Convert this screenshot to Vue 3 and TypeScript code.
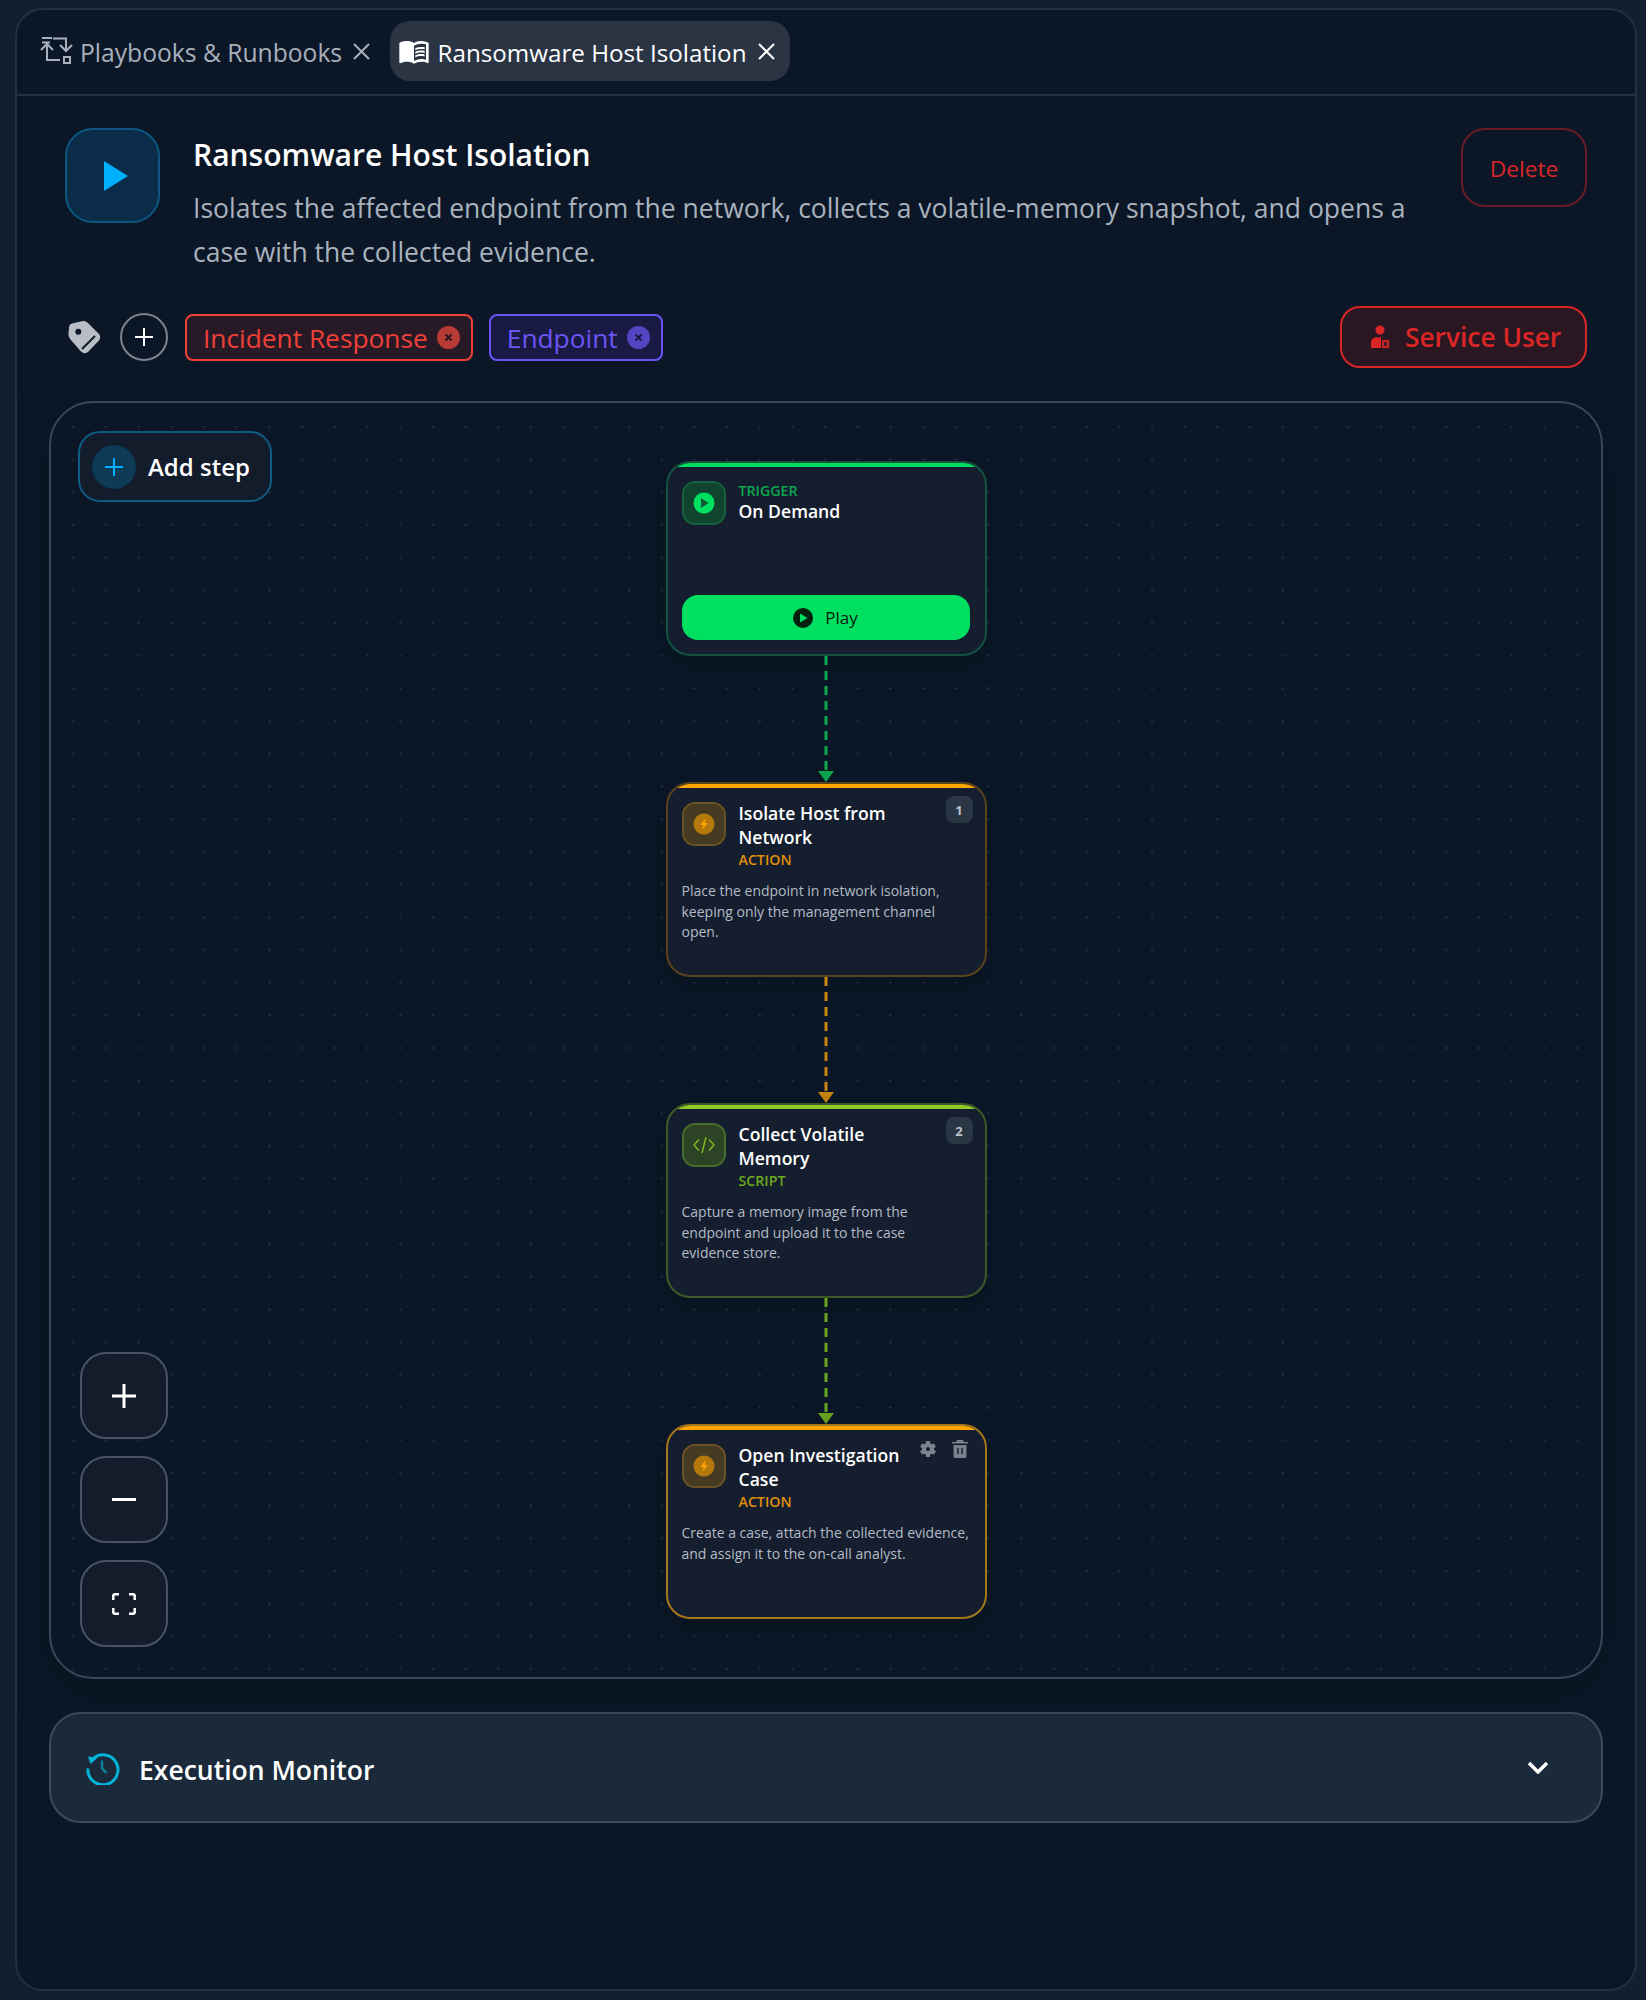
<script setup lang="ts">
type Kind = 'action' | 'script'
interface Step {
  id: number
  kind: Kind
  label: string
  title: string
  desc: string
  active?: boolean
}
const steps: Step[] = [
  { id: 1, kind: 'action', label: 'ACTION', title: 'Isolate Host from Network', desc: 'Place the endpoint in network isolation,\nkeeping only the management channel\nopen.' },
  { id: 2, kind: 'script', label: 'SCRIPT', title: 'Collect Volatile Memory', desc: 'Capture a memory image from the\nendpoint and upload it to the case\nevidence store.' },
  { id: 3, kind: 'action', label: 'ACTION', title: 'Open Investigation Case', desc: 'Create a case, attach the collected evidence,\nand assign it to the on-call analyst.', active: true },
]
</script>

<template>
  <div class="panel">
    <nav class="tabs">
      <div class="tab">
        <svg class="tab-flow" viewBox="0 0 28 28" fill="none" stroke="currentColor" stroke-width="2">
          <path d="M-1 1h10M-1 5.500h8M10 1.500h13V14M17 8l6 6 6-6M4 23V7.500M-2 13l6-6 6 6M3 23h14" />
          <rect x="21" y="20" width="6" height="6" />
        </svg>
        <span class="tab-label-a">Playbooks &amp; Runbooks</span>
        <svg class="tab-x" viewBox="0 0 17 17" fill="none" stroke="currentColor" stroke-width="2"><path d="M1 1l15 15M16 1L1 16" /></svg>
      </div>
      <div class="tab tab-on">
        <svg class="tab-book" viewBox="0 0 24 24" fill="currentColor">
          <path d="M21 5c-1.11-.35-2.33-.5-3.5-.5-1.95 0-4.05.4-5.5 1.5-1.45-1.1-3.55-1.5-5.5-1.5S2.45 4.9 1 6v14.65c0 .25.25.5.5.5.1 0 .15-.05.25-.05C3.1 20.45 5.05 20 6.5 20c1.95 0 4.05.4 5.5 1.5 1.35-.85 3.8-1.5 5.5-1.5 1.65 0 3.35.3 4.75 1.05.1.05.15.05.25.05.25 0 .5-.25.5-.5V6c-.6-.45-1.25-.75-2-1zm0 13.5c-1.1-.35-2.3-.5-3.5-.5-1.7 0-4.15.65-5.5 1.5V8c1.35-.85 3.8-1.5 5.5-1.5 1.2 0 2.4.15 3.5.5v11.5z" />
          <path d="M17.5 10.5c.88 0 1.73.09 2.5.26V9.24c-.79-.15-1.64-.24-2.5-.24-1.7 0-3.24.29-4.5.83v1.66c1.13-.64 2.7-.99 4.5-.99zM13 12.49v1.66c1.13-.64 2.7-.99 4.5-.99.88 0 1.73.09 2.5.26V11.9c-.79-.15-1.64-.24-2.5-.24-1.7 0-3.24.3-4.5.83zM17.5 14.33c-1.7 0-3.24.29-4.5.83v1.66c1.13-.64 2.7-.99 4.5-.99.88 0 1.73.09 2.5.26v-1.52c-.79-.16-1.64-.24-2.5-.24z" />
        </svg>
        <span class="tab-label-b">Ransomware Host Isolation</span>
        <svg class="tab-x" viewBox="0 0 17 17" fill="none" stroke="currentColor" stroke-width="2"><path d="M1 1l15 15M16 1L1 16" /></svg>
      </div>
    </nav>

    <header class="head">
      <div class="head-icon">
        <svg width="24" height="30" viewBox="0 0 24 30"><path d="M0 0l24 15L0 30z" fill="#00b0ff" /></svg>
      </div>
      <div class="head-text">
        <h1>Ransomware Host Isolation</h1>
        <p>Isolates the affected endpoint from the network, collects a volatile-memory snapshot, and opens a case with the collected evidence.</p>
      </div>
      <button class="delete">Delete</button>
    </header>

    <div class="meta">
      <svg class="tag-ico" viewBox="0 0 34 34">
        <path d="M16 1 5 3.500Q2 4 2 8l-.5 5Q1 17 3.500 19.500L14 31.500q4 3.500 7.500 0L31.500 21q3.500-4 0-7.500L21 3Q18.500.5 16 1z" fill="#b9bdc5" />
        <circle cx="11.300" cy="11.700" r="3" fill="#0b1727" />
        <path d="M15 29 28 16" stroke="#0b1727" stroke-width="2" />
      </svg>
      <button class="round-add">
        <svg width="20" height="20" viewBox="0 0 20 20" stroke="#fff" stroke-width="2"><path d="M10 1v18M1 10h18" /></svg>
      </button>
      <span class="tag tag-red">Incident Response<i class="tag-x"><svg width="9" height="9" viewBox="0 0 9 9" stroke="#2a1620" stroke-width="2"><path d="M1.500 1.500l6 6M7.500 1.500l-6 6" /></svg></i></span>
      <span class="tag tag-violet">Endpoint<i class="tag-x"><svg width="9" height="9" viewBox="0 0 9 9" stroke="#191a44" stroke-width="2"><path d="M1.500 1.500l6 6M7.500 1.500l-6 6" /></svg></i></span>
      <button class="svc">
        <svg width="20" height="24" viewBox="0 0 20 24" fill="#dc2626">
          <circle cx="10" cy="5" r="4.500" />
          <path d="M1 23V18q0-5.500 5.500-5.500H11V23z" />
          <rect x="11.500" y="14.500" width="8" height="9" rx="1.500" stroke="#2b1722" />
          <path d="M13.800 17l3.400 4M17.200 17l-3.400 4" stroke="#2b1722" stroke-width="1.300" />
        </svg>
        Service User
      </button>
    </div>

    <section class="canvas">
      <button class="add-step">
        <span class="add-dot"><svg width="18" height="18" viewBox="0 0 18 18" stroke="#00b0ff" stroke-width="2"><path d="M9 0v18M0 9h18" /></svg></span>
        Add step
      </button>
      <div class="zoom-ctl">
        <button><svg width="24" height="24" viewBox="0 0 24 24" stroke="#fff" stroke-width="3"><path d="M12 0v24M0 12h24" /></svg></button>
        <button><svg width="24" height="24" viewBox="0 0 24 24" stroke="#fff" stroke-width="3"><path d="M0 11.500h24" /></svg></button>
        <button><svg width="24" height="22" viewBox="0 0 24 22" fill="none" stroke="#fff" stroke-width="2.500"><path d="M7 1.300H3Q1.300 1.300 1.300 3v4M17 1.300h4q1.700 0 1.700 1.700v4M7 20.700H3q-1.700 0-1.700-1.700v-4M17 20.700h4q1.700 0 1.700-1.700v-4" /></svg></button>
      </div>

      <article class="node node-trigger">
        <div class="bar"></div>
        <div class="node-body">
          <div class="node-head">
            <div class="box">
              <svg width="22" height="22" viewBox="0 0 22 22"><circle cx="11" cy="11" r="10.500" fill="#00e060" /><path d="M8 6l7.500 5L8 16z" fill="#0f5a38" /></svg>
            </div>
            <div class="tt">
              <div class="kind kind-first">TRIGGER</div>
              <div class="name">On Demand</div>
            </div>
          </div>
          <button class="play">
            <svg width="20" height="20" viewBox="0 0 20 20"><circle cx="10" cy="10" r="10" fill="#04200f" /><path d="M7 5.500l7.500 4.500L7 14.500z" fill="#00e060" /></svg>
            Play
          </button>
        </div>
      </article>

      <template v-for="(s, i) in steps" :key="s.id">
        <svg class="link" :class="i === 0 ? 'link-trigger' : 'link-' + steps[i - 1].kind" width="16" height="126" viewBox="0 0 16 126">
          <path d="M8 0V115" fill="none" stroke="currentColor" stroke-width="3" stroke-dasharray="9 6" />
          <path d="M0 115h16l-8 11z" fill="currentColor" />
        </svg>
        <article class="node" :class="['node-' + s.kind, { 'node-active': s.active }]">
          <div class="bar"></div>
          <div class="node-body">
            <div class="node-head">
              <div class="box">
                <svg v-if="s.kind === 'action'" width="22" height="22" viewBox="0 0 22 22"><circle cx="11" cy="11" r="10.500" fill="#b5780c" /><path d="M12.500 5l-5 7h3l-1 5 5-7h-3z" fill="#ffa500" /></svg>
                <svg v-else width="22" height="16" viewBox="0 0 22 16" fill="none" stroke="#7bba22" stroke-width="1.500"><path d="M6 2.500L1 8l5 5.500M16 2.500l5 5.500-5 5.500M13 0 9 16" /></svg>
              </div>
              <div class="tt">
                <div class="name name-wrap">{{ s.title }}</div>
                <div class="kind">{{ s.label }}</div>
              </div>
              <span v-if="!s.active" class="badge">{{ s.id }}</span>
              <div v-else class="tools">
                <svg width="20" height="20" viewBox="0 0 24 24" fill="#7b818c"><path d="M19.140 12.940c.04-.3.06-.61.06-.94 0-.32-.02-.64-.07-.94l2.030-1.580c.18-.14.23-.41.12-.61l-1.920-3.320c-.12-.22-.37-.29-.59-.22l-2.390.96c-.5-.38-1.030-.7-1.620-.94l-.36-2.540c-.04-.24-.24-.41-.48-.41h-3.840c-.24 0-.43.17-.47.41l-.36 2.540c-.59.24-1.130.57-1.620.94l-2.390-.96c-.22-.08-.47 0-.59.22L2.740 8.870c-.12.21-.08.47.12.61l2.030 1.580c-.05.3-.09.63-.09.94s.02.64.07.94l-2.030 1.580c-.18.14-.23.41-.12.61l1.920 3.320c.12.22.37.29.59.22l2.390-.96c.5.38 1.030.7 1.620.94l.36 2.540c.05.24.24.41.48.41h3.840c.24 0 .44-.17.47-.41l.36-2.540c.59-.24 1.130-.56 1.620-.94l2.390.96c.22.08.47 0 .59-.22l1.920-3.320c.12-.22.07-.47-.12-.61l-2.010-1.580z" /><circle cx="12" cy="12" r="2.400" fill="#141e2e" /></svg>
                <svg width="16" height="18" viewBox="0 0 16 18" fill="#7b818c"><path d="M5 0h6l1 2h4v1.500H0V2h4zM1.500 5h13v11q0 2-2 2h-9q-2 0-2-2z" /><path d="M6 8v6M10 8v6" stroke="#141e2e" stroke-width="1.400" /></svg>
              </div>
            </div>
            <p class="node-desc">{{ s.desc }}</p>
          </div>
        </article>
      </template>
    </section>

    <section class="monitor">
      <svg width="34" height="34" viewBox="0 0 34 34" fill="none">
        <path d="M6.500 8A15 15 0 1 1 2 17.500" stroke="#05b5d8" stroke-width="3" />
        <path d="M2 5.500l9.500 1.500-7 6z" fill="#05b5d8" />
        <path d="M16 9.500v8l4.500 4.500" stroke="#0f7a96" stroke-width="2.500" />
      </svg>
      <h2>Execution Monitor</h2>
      <svg class="chev" width="20" height="13" viewBox="0 0 20 13" fill="none" stroke="#fff" stroke-width="3.500"><path d="M1 2l9 9 9-9" /></svg>
    </section>
  </div>
</template>

<style>
html, body { margin: 0; background: #131f30; }
</style>

<style scoped>
* { box-sizing: border-box; }
button { font-family: inherit; cursor: pointer; }
.panel {
  margin: 8px 9px 9px 15px;
  height: 1983px;
  border: 2px solid #242f3f;
  border-radius: 28px;
  background: #0b1727;
  font-family: "Open Sans", "Noto Sans", sans-serif;
  color: #fff;
  overflow: hidden;
}
.tabs {
  height: 86px;
  padding: 0 0 2px 17px;
  display: flex;
  align-items: center;
  gap: 13.5px;
  border-bottom: 2px solid #242f3f;
}
.tab {
  height: 60px;
  display: flex;
  align-items: center;
  color: #a8b0bc;
  border-radius: 20px;
  padding: 0 6px 0 9px;
}
.tab span { margin-top: 2px; }
.tab-label-a { font-size: 24.65px; }
.tab-label-b { font-size: 24.2px; }
.tab-flow { width: 28px; height: 28px; margin-right: 9px; overflow: visible; }
.tab-x { width: 17px; height: 17px; margin-left: 11px; }
.tab-on { background: #2a3443; color: #fff; padding: 0 15px 0 8px; }
.tab-book { width: 32px; height: 32px; margin-right: 8px; }
.head { display: flex; padding: 32px 48px 0; align-items: flex-start; }
.head-icon {
  flex: none;
  width: 95px; height: 95px;
  border: 2px solid #0b5782;
  border-radius: 28px;
  background: #0a2c48;
  display: flex; align-items: center; justify-content: center;
  padding-left: 6px;
  margin-right: 33px;
}
.head-text { flex: 1; }
h1 { margin: 8px 0 12px; font-size: 30px; line-height: 38px; font-weight: 600; }
.head-text p { margin: 0; width: 1240px; font-size: 26.5px; line-height: 44px; color: #a9b2bd; }
.delete {
  flex: none;
  width: 126px; height: 79px;
  border: 2px solid #6b1c28;
  border-radius: 24px;
  background: transparent;
  color: #dc2626;
  font-size: 22.7px;
  padding: 2px 0 0;
}
.meta { display: flex; align-items: center; margin: 32px 48px 0 50px; height: 62px; }
.tag-ico { width: 34px; height: 34px; margin-right: 19px; }
.round-add {
  width: 48px; height: 48px;
  border: 2px solid #7d838c;
  border-radius: 50%;
  background: transparent;
  display: flex; align-items: center; justify-content: center;
  padding: 0;
  margin-right: 17px;
}
.tag {
  height: 47px;
  display: flex; align-items: center;
  border: 2px solid;
  border-radius: 8px;
  font-size: 26.3px;
  padding: 1px 11px 0 16px;
  margin-right: 16px;
}
.tag-red { border-color: #ef4038; background: #271a26; color: #ef4038; }
.tag-violet { border-color: #6c55f5; background: #191a44; color: #6c55f5; }
.tag-x {
  width: 23px; height: 23px;
  border-radius: 50%;
  margin: -1px 0 0 9px;
  display: flex; align-items: center; justify-content: center;
}
.tag-red .tag-x { background: #b83a34; }
.tag-violet .tag-x { background: #5344c2; }
.svc {
  margin-left: auto;
  width: 247px; height: 62px;
  border: 2.500px solid #dc2626;
  border-radius: 20px;
  background: #2b1722;
  color: #dc2626;
  font-size: 26.3px;
  font-weight: 600;
  display: flex; align-items: center;
  gap: 15px;
  padding: 0 0 0 28px;
  white-space: nowrap;
}
.canvas {
  position: relative;
  height: 1278px;
  margin: 33px 32px 0;
  border: 2px solid #3b4656;
  border-radius: 44px;
  background-color: #0b1727;
  background-image: radial-gradient(circle, #212d3d 1px, transparent 1.300px);
  background-size: 32.7px 32.7px;
  background-position: 6px 7.6px;
  box-shadow: 0 16px 60px rgba(0, 0, 0, .16);
  padding-top: 58px;
  display: flex;
  flex-direction: column;
  align-items: center;
}
.add-step {
  position: absolute;
  left: 27px; top: 28px;
  width: 194px; height: 71px;
  border: 2px solid #0f5c85;
  border-radius: 22px;
  background: #131c2b;
  color: #fff;
  font-size: 24px;
  font-weight: 600;
  display: flex; align-items: center;
  gap: 12px;
  padding: 0 0 0 12px;
}
.add-dot {
  width: 44px; height: 44px;
  border-radius: 50%;
  background: #0e3a56;
  display: flex; align-items: center; justify-content: center;
}
.zoom-ctl {
  position: absolute;
  left: 29px; bottom: 30px;
  display: flex; flex-direction: column;
  gap: 17px;
}
.zoom-ctl button {
  width: 88px; height: 87px;
  border: 2px solid #475262;
  border-radius: 26px;
  background: #131c2b;
  display: flex; align-items: center; justify-content: center;
  padding: 0;
}
.node {
  flex: none;
  width: 321px; height: 195px;
  border: 2px solid;
  border-radius: 24px;
  background: #141e2e;
  overflow: hidden;
  box-shadow: 0 8px 30px rgba(0, 0, 0, .2);
}
.bar { height: 4px; }
.node-trigger { border-color: #14523f; }
.node-trigger .bar { background: #00e060; }
.node-trigger .kind { color: #0ba84f; }
.node-trigger .box { background: #11442f; border-color: #15603f; }
.node-action { border-color: #5a431c; }
.node-action .bar { background: #ffa500; }
.node-action .kind { color: #e08e0b; }
.node-action .box { background: #453a22; border-color: #6b5224; }
.node-active { border-color: #a5761a; }
.node-script { border-color: #3d5a26; }
.node-script .bar { background: #8fc927; }
.node-script .kind { color: #6bab1d; }
.node-script .box { background: #2c4326; border-color: #466c2a; }
.node-body { padding: 14px 14px 0; position: relative; }
.node-head { display: flex; align-items: flex-start; min-height: 44px; }
.box {
  flex: none;
  width: 44px; height: 44px;
  border: 2px solid;
  border-radius: 13px;
  display: flex; align-items: center; justify-content: center;
  margin-right: 13px;
}
.tt { flex: none; width: 182px; }
.kind { font-size: 14.2px; line-height: 18px; font-weight: 600; margin-top: 2px; }
.kind-first { margin-top: 1px; line-height: 18px; }
.name { font-size: 17.6px; line-height: 24px; font-weight: 600; }
.name-wrap { margin-top: -1px; }
.kind-first + .name { margin-top: -1px; }
.badge {
  position: absolute;
  right: 12px; top: 8px;
  width: 27px; height: 27px;
  border-radius: 8px;
  background: #2a3644;
  color: #bcc3cc;
  font-size: 13px;
  font-weight: 700;
  display: flex; align-items: center; justify-content: center;
}
.tools {
  position: absolute;
  right: 17px; top: 9px;
  display: flex; align-items: center; gap: 14px;
}
.node-desc { margin: 12px 0 0; font-size: 14px; line-height: 20.6px; color: #b4bbc6; white-space: pre-line; margin-right: -4px; }
.play {
  margin-top: 70px;
  width: 288px; height: 45px;
  border: 0;
  border-radius: 16px;
  background: #00e060;
  color: #04200f;
  font-size: 17px;
  display: flex; align-items: center; justify-content: center;
  gap: 12px;
  padding: 0;
}
.link { flex: none; display: block; }
.link-trigger { color: #0ba84f; }
.link-action { color: #c9860f; }
.link-script { color: #6aa51e; }
.monitor {
  height: 111px;
  margin: 33px 32px 0;
  border: 2px solid #3d4a5a;
  border-radius: 32px;
  background: #1b2a3b;
  display: flex; align-items: center;
  padding: 0 0 0 35px;
}
.monitor h2 { margin: 5px 0 0 19px; font-size: 26.5px; font-weight: 600; }
.chev { margin-left: auto; margin-right: 53px; }
</style>
